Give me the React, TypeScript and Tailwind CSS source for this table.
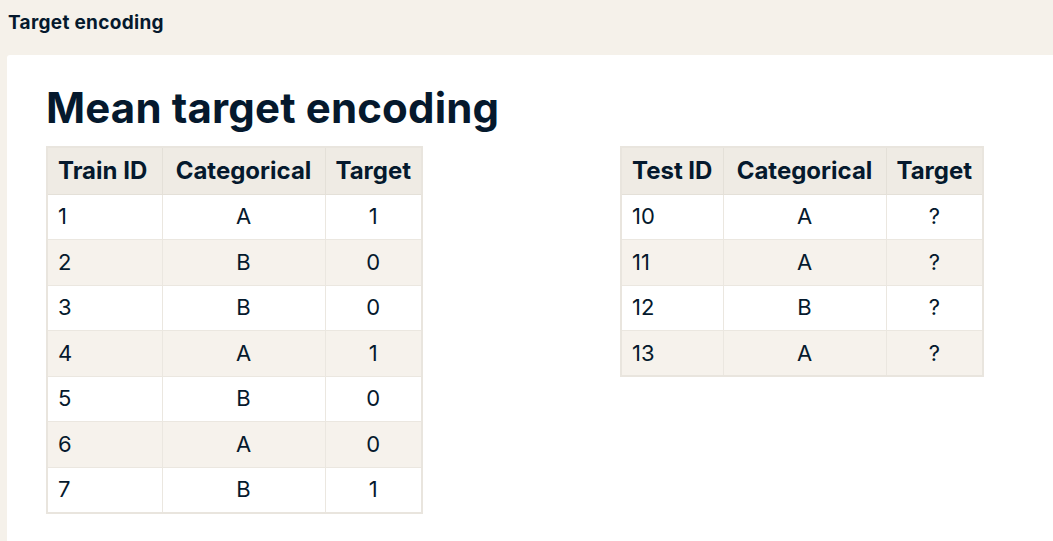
import React from 'react';

type Row = [string, string, string];

const trainRows: Row[] = [
  ['1', 'A', '1'],
  ['2', 'B', '0'],
  ['3', 'B', '0'],
  ['4', 'A', '1'],
  ['5', 'B', '0'],
  ['6', 'A', '0'],
  ['7', 'B', '1'],
];

const testRows: Row[] = [
  ['10', 'A', '?'],
  ['11', 'A', '?'],
  ['12', 'B', '?'],
  ['13', 'A', '?'],
];

interface DataTableProps {
  idLabel: string;
  rows: Row[];
  idWidth: string;
}

const DataTable: React.FC<DataTableProps> = ({ idLabel, rows, idWidth }) => {
  return (
    <table className="border-collapse border-2 border-[#e9e5de] text-[#05192d]">
      <thead>
        <tr className="bg-[#efebe4] h-[47px]">
          <th className={`${idWidth} border border-[#e4e0d8] px-[10px] text-left text-[24px] font-bold`}>{idLabel}</th>
          <th className="w-[163px] border border-[#e4e0d8] px-[8px] text-center text-[24px] font-bold">Categorical</th>
          <th className="w-[97px] border border-[#e4e0d8] px-[8px] text-center text-[24px] font-bold">Target</th>
        </tr>
      </thead>
      <tbody>
        {rows.map((row, i) => (
          <tr key={i} className={`h-[45.5px] ${i % 2 === 1 ? 'bg-[#f6f2ec]' : 'bg-white'}`}>
            <td className="border border-[#ebe7e0] px-[10px] text-left text-[22px]">{row[0]}</td>
            <td className="border border-[#ebe7e0] px-[10px] text-center text-[22px]">{row[1]}</td>
            <td className="border border-[#ebe7e0] px-[10px] text-center text-[22px]">{row[2]}</td>
          </tr>
        ))}
      </tbody>
    </table>
  );
};

export default function App() {
  return (
    <div className="w-[1053px] h-[541px] overflow-hidden bg-[#f5f1ea] flex flex-col font-['Inter',sans-serif] text-[#05192d]">
      {/* Top bar */}
      <div className="h-[55px] shrink-0 px-2 pt-[9px]">
        <span className="text-[19px] font-bold tracking-[0.3px]">Target encoding</span>
      </div>

      {/* Slide */}
      <div className="flex-1 ml-[7px] bg-white rounded-tl-[3px] pl-[39px] pt-[25px]">
        <h1 className="text-[42px] font-bold leading-[56px] tracking-[0.15px]">Mean target encoding</h1>
        <div className="flex items-start gap-[197px] mt-[10px]">
          <DataTable idLabel="Train ID" rows={trainRows} idWidth="w-[115px]" />
          <DataTable idLabel="Test ID" rows={testRows} idWidth="w-[102px]" />
        </div>
      </div>
    </div>
  );
}
